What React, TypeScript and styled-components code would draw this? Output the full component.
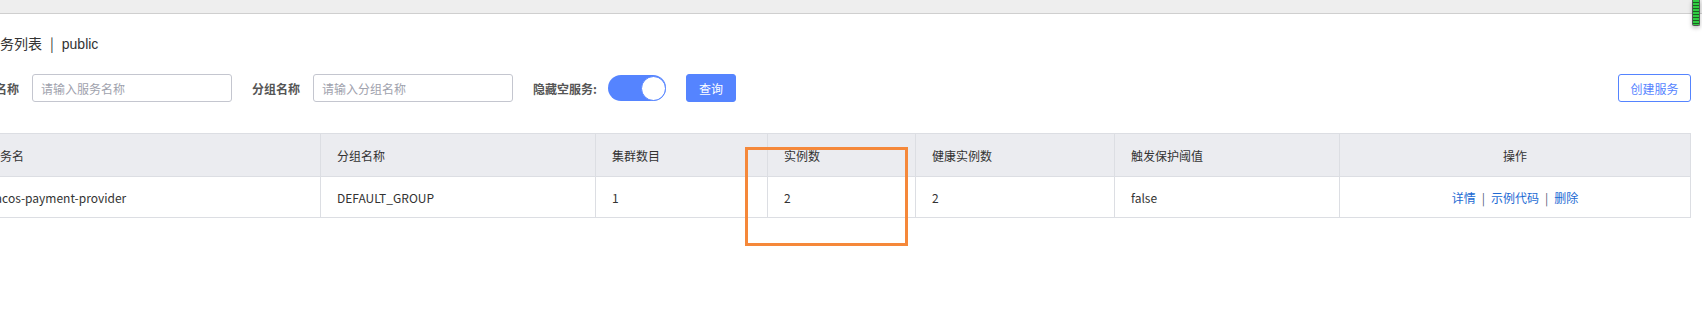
import React from "react";
import styled, { createGlobalStyle } from "styled-components";

const Global = createGlobalStyle`
  html, body { margin: 0; padding: 0; background: #fff; overflow: hidden; }
  body { font-family: "Noto Sans CJK SC", "Noto Sans", sans-serif; color: #333; }
  * { box-sizing: border-box; }
`;

const TopBar = styled.div`
  height: 14px;
  background: #eeeeee;
  border-bottom: 1px solid #cfcfcf;
`;

const Meter = styled.div`
  position: absolute;
  top: 0;
  right: 2px;
  width: 8px;
  height: 26px;
  border: 1px solid #555;
  border-top: none;
  border-radius: 0 0 2px 2px;
  background: repeating-linear-gradient(
    to bottom,
    #2ecc40 0px,
    #2ecc40 2px,
    #1b5e20 2px,
    #1b5e20 3px
  );
  box-shadow: 0 2px 4px rgba(0, 0, 0, 0.25);
`;

const Page = styled.div`
  margin: 0 11px 0 -29px;
`;

const Title = styled.div`
  margin-top: 19px;
  padding-left: 15px;
  height: 20px;
  line-height: 20px;
  font-size: 14px;
  color: #333;
`;

const Latin = styled.span`
  font-family: "Liberation Sans", Arial, sans-serif;
`;

const Sep = styled.span`
  margin: 0 8px;
  color: #333;
`;

const FormRow = styled.div`
  margin-top: 21px;
  display: flex;
  align-items: center;
  height: 28px;
`;

const Field = styled.div<{ $gap?: number }>`
  display: flex;
  align-items: center;
  gap: ${(p) => p.$gap ?? 13}px;
  margin-right: 20px;
`;

const Label = styled.label`
  font-size: 12px;
  font-weight: 700;
  color: #555;
  white-space: nowrap;
`;

const Input = styled.input`
  width: 200px;
  height: 28px;
  border: 1px solid #c4c6cf;
  border-radius: 3px;
  padding: 0 8px;
  font-family: inherit;
  font-size: 12px;
  color: #333;
  outline: none;
  &::placeholder { color: #a0a2ad; }
`;

const Switch = styled.div<{ $on: boolean }>`
  width: 58px;
  height: 26px;
  border-radius: 13px;
  background: ${(p) => (p.$on ? "#5584ff" : "#c4c6cf")};
  display: flex;
  align-items: center;
  justify-content: ${(p) => (p.$on ? "flex-end" : "flex-start")};
`;

const Knob = styled.div`
  width: 25px;
  height: 25px;
  border-radius: 50%;
  background: #fff;
  border: 1px solid #5584ff;
`;

const Spacer = styled.div`
  flex: 1;
`;

const Button = styled.button<{ $primary?: boolean; $w: number }>`
  width: ${(p) => p.$w}px;
  height: 28px;
  border-radius: 3px;
  font-family: inherit;
  font-size: 12px;
  cursor: pointer;
  padding: 0;
  border: 1px solid #5584ff;
  background: ${(p) => (p.$primary ? "#5584ff" : "#fff")};
  color: ${(p) => (p.$primary ? "#fff" : "#5584ff")};
`;

const cols = "348px 275px 172px 148px 199px 225px 1fr";

const Table = styled.div`
  margin-top: 31px;
  border: 1px solid #dcdee3;
  border-bottom: none;
  font-size: 12px;
`;

const Row = styled.div<{ $head?: boolean }>`
  display: grid;
  grid-template-columns: ${cols};
  height: ${(p) => (p.$head ? 43 : 41)}px;
  background: ${(p) => (p.$head ? "#ebecf0" : "#fff")};
  border-bottom: 1px solid #dcdee3;
`;

const Cell = styled.div<{ $center?: boolean }>`
  display: flex;
  align-items: center;
  justify-content: ${(p) => (p.$center ? "center" : "flex-start")};
  padding: 0 16px;
  color: #333;
  white-space: nowrap;
  overflow: hidden;
  & + & { border-left: 1px solid #dcdee3; }
`;

const Link = styled.a`
  color: #2169d3;
  text-decoration: none;
  cursor: pointer;
`;

const LinkSep = styled.span`
  color: #55617a;
  margin: 0 6px;
`;

const Highlight = styled.div`
  position: absolute;
  left: 745px;
  top: 147px;
  width: 163px;
  height: 99px;
  border: 3px solid #f5883a;
  pointer-events: none;
`;

const Root = styled.div`
  position: relative;
  width: 1702px;
  height: 313px;
  overflow: hidden;
`;

const headers = ["服务名", "分组名称", "集群数目", "实例数", "健康实例数", "触发保护阈值", "操作"];
const row = ["nacos-payment-provider", "DEFAULT_GROUP", "1", "2", "2", "false"];

export default function App() {
  return (
    <Root>
      <Global />
      <TopBar />
      <Meter />
      <Page>
        <Title>
          服务列表<Sep>|</Sep><Latin>public</Latin>
        </Title>
        <FormRow>
          <Field>
            <Label>服务名称</Label>
            <Input placeholder="请输入服务名称" />
          </Field>
          <Field>
            <Label>分组名称</Label>
            <Input placeholder="请输入分组名称" />
          </Field>
          <Field $gap={11}>
            <Label>隐藏空服务:</Label>
            <Switch $on>
              <Knob />
            </Switch>
          </Field>
          <Button $primary $w={50}>查询</Button>
          <Spacer />
          <Button $w={73}>创建服务</Button>
        </FormRow>
        <Table>
          <Row $head>
            {headers.map((h, i) => (
              <Cell key={h} $center={i === 6}>{h}</Cell>
            ))}
          </Row>
          <Row>
            {row.map((v, i) => (
              <Cell key={i}>{v}</Cell>
            ))}
            <Cell $center>
              <Link>详情</Link>
              <LinkSep>|</LinkSep>
              <Link>示例代码</Link>
              <LinkSep>|</LinkSep>
              <Link>删除</Link>
            </Cell>
          </Row>
        </Table>
      </Page>
      <Highlight />
    </Root>
  );
}
